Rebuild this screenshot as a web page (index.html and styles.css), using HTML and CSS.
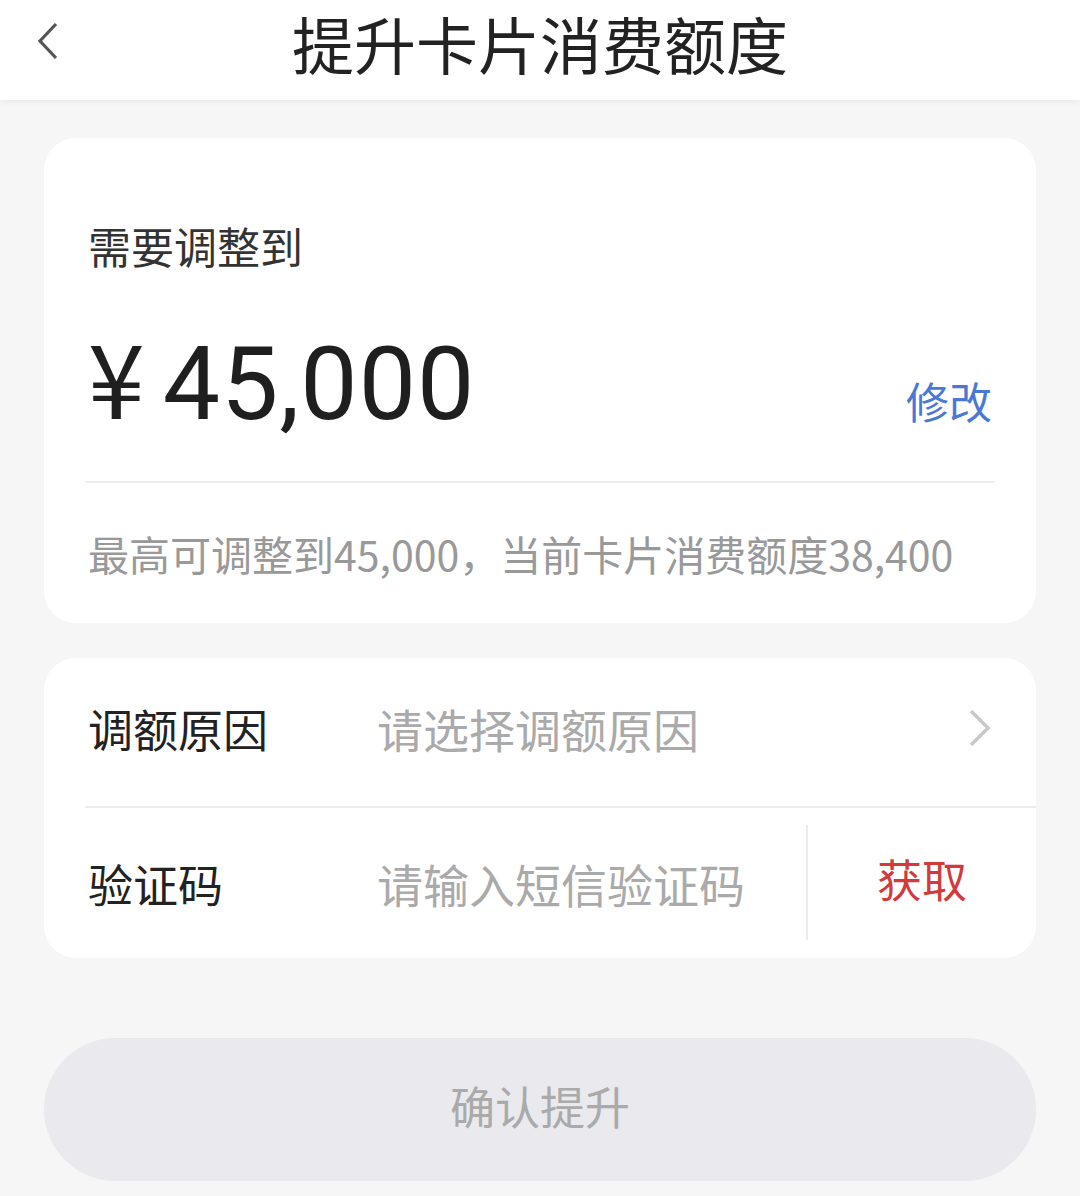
FILE: index.html
```html
<!DOCTYPE html>
<html lang="zh-CN">

<head>
    <meta charset="UTF-8">
    <meta name="viewport" content="width=device-width, initial-scale=1.0">
    <title>提升卡片消费额度</title>
    <link rel="stylesheet" href="styles.css">
</head>

<body>
    <header class="top-bar">
        <button class="back-btn" type="button" aria-label="返回">
            <svg width="24" height="38" viewBox="0 0 24 38">
                <path d="M20 2 L4 19 L20 36" fill="none" stroke="#555" stroke-width="3.2" />
            </svg>
        </button>
        <h1>提升卡片消费额度</h1>
    </header>

    <main class="page">
        <section class="card amount-card">
            <div class="amount-label">需要调整到</div>
            <div class="amount-row">
                <div class="amount"><span class="currency">¥</span>45,000</div>
                <a class="edit-link" href="#">修改</a>
            </div>
            <div class="divider"></div>
            <p class="hint">最高可调整到45,000，当前卡片消费额度38,400</p>
        </section>

        <section class="card form-card">
            <div class="form-row">
                <span class="row-label">调额原因</span>
                <span class="row-value">请选择调额原因</span>
                <svg class="row-arrow" width="26" height="40" viewBox="0 0 26 40">
                    <path d="M4 3 L21 20 L4 37" fill="none" stroke="#c8c8c8" stroke-width="3.5" />
                </svg>
            </div>
            <div class="form-row code-row">
                <span class="row-label">验证码</span>
                <span class="row-value">请输入短信验证码</span>
                <span class="get-code">获取</span>
            </div>
        </section>

        <button class="submit-btn" type="button" disabled>确认提升</button>
    </main>
</body>

</html>
```

FILE: styles.css
```css
/* styles.css */
body {
    margin: 0;
    background-color: #f6f6f6;
    font-family: "Noto Sans CJK SC", "Noto Sans", sans-serif;
    color: #222;
}

.top-bar {
    position: relative;
    height: 100px;
    background: #fff;
    box-shadow: 0 2px 5px rgba(0, 0, 0, 0.05);
    display: flex;
    align-items: center;
    justify-content: center;
}

.back-btn {
    position: absolute;
    left: 36px;
    top: 22px;
    padding: 0;
    border: none;
    background: none;
}

.back-btn svg {
    display: block;
}

.top-bar h1 {
    margin: 0 0 14px;
    font-size: 62px;
    font-weight: 400;
    line-height: 1.2;
    color: #222;
}

.page {
    padding: 38px 44px 0;
}

.card {
    background: #fff;
    border-radius: 32px;
}

.amount-card {
    padding: 86px 44px 49px;
}

.amount-label {
    font-size: 43px;
    line-height: 1;
    color: #333;
}

.amount-row {
    display: flex;
    justify-content: space-between;
    align-items: baseline;
    margin-top: 57px;
}

.amount {
    font-family: Roboto, "Noto Sans", sans-serif;
    font-size: 102px;
    line-height: 1;
    color: #1f1f1f;
    letter-spacing: 1px;
}

.currency {
    font-family: "Noto Sans CJK SC", sans-serif;
    margin-right: 17px;
}

.edit-link {
    font-size: 43px;
    line-height: 1;
    color: #4a78d4;
    text-decoration: none;
}

.divider {
    height: 2px;
    background: #ececec;
    margin: 46px -3px 0;
}

.hint {
    margin: 50px 0 0;
    font-size: 41px;
    line-height: 1;
    color: #999;
    white-space: nowrap;
}

.form-card {
    margin-top: 35px;
    padding-left: 44px;
}

.form-row {
    box-sizing: border-box;
    display: flex;
    align-items: center;
    height: 148px;
    padding: 0 43px 8px 0;
    font-size: 45px;
}

.form-row + .form-row {
    border-top: 2px solid #ececec;
    margin-left: -3px;
    padding-left: 3px;
}

.row-label {
    width: 289px;
    color: #222;
}

.row-value {
    flex: 1;
    color: #aaa;
    font-size: 46px;
}

.row-arrow {
    display: block;
}

.code-row {
    height: 152px;
    padding: 0;
}

.get-code {
    width: 228px;
    align-self: stretch;
    margin: 17px 0 18px;
    padding-bottom: 8px;
    border-left: 2px solid #ececec;
    display: flex;
    align-items: center;
    justify-content: center;
    color: #d23a3c;
}

.submit-btn {
    display: block;
    width: 100%;
    height: 143px;
    margin-top: 80px;
    padding: 0 0 8px;
    border: none;
    border-radius: 72px;
    background: #e9e9ee;
    color: #aaa;
    font-family: "Noto Sans CJK SC", sans-serif;
    font-size: 45px;
}
```
